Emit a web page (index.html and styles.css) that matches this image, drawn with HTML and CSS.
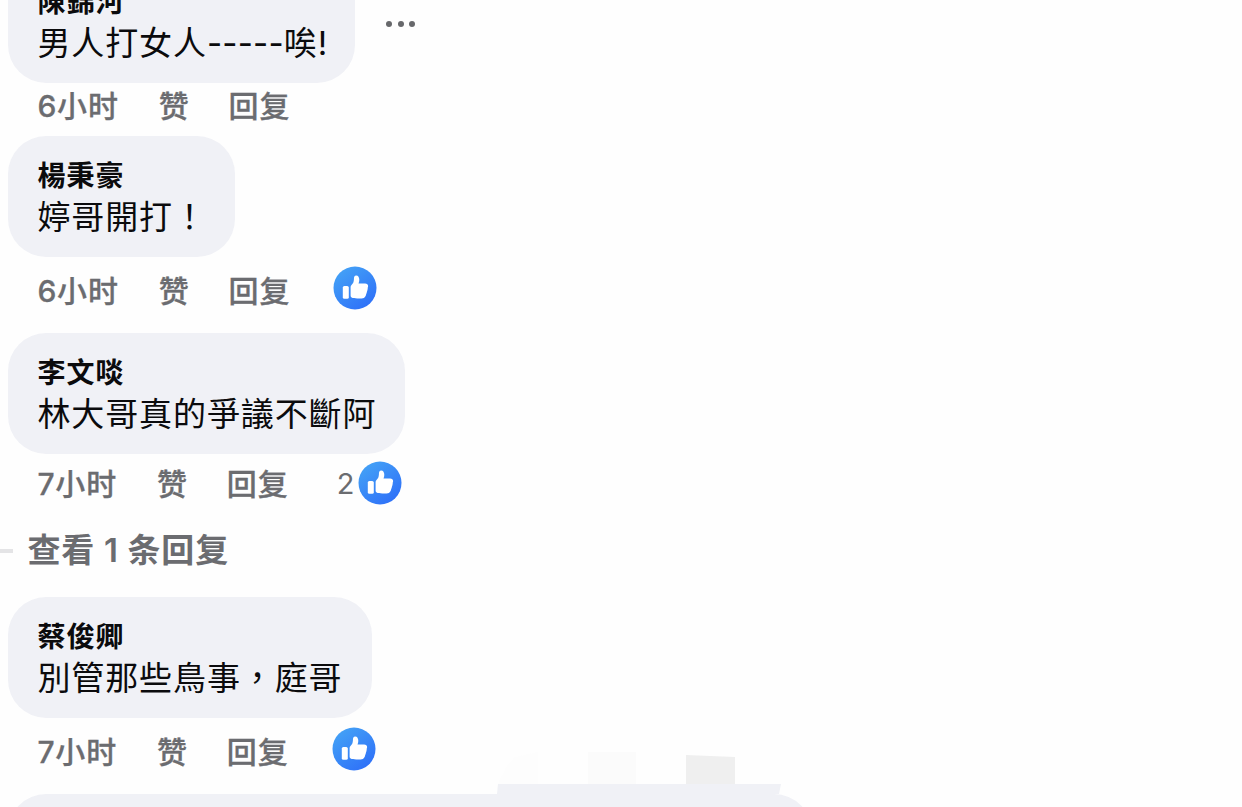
FILE: index.html
```
<!DOCTYPE html>
<html lang="zh-TW">
<head>
  <meta charset="UTF-8">
  <meta name="viewport" content="width=device-width, initial-scale=1">
  <title>留言</title>
  <link rel="stylesheet" href="styles.css">
</head>
<body>

  <!-- 共用圖示 -->
  <svg class="sprite" width="0" height="0">
    <defs>
      <linearGradient id="likeBlue" x1="0.15" y1="0.1" x2="0.75" y2="0.9">
        <stop offset="0" stop-color="#43a0f6"/>
        <stop offset="1" stop-color="#3074f8"/>
      </linearGradient>
      <symbol id="like" viewBox="0 0 44 44">
        <circle cx="22" cy="22" r="21.5" fill="url(#likeBlue)"/>
        <rect x="9.8" y="20" width="6" height="12.8" rx="1.6" fill="#fff"/>
        <path fill="#fff" d="M17.6 21.4c0-1.3.5-1.9 1.3-2.8 1.3-1.5 1.9-2.9 2-5.2 0-2.4.6-3.9 2.2-3.9 2.2 0 3.2 2 3.2 4.3 0 1.4-.3 2.4-.8 3.6h6.6c1.9 0 3 1.1 3 2.7 0 .7-.2 1.2-.4 1.7.1.7 0 1.3-.2 1.9-.1.8-.3 1.4-.6 2-.1 1.1-.3 1.7-.7 2.3-.1.8-.2 1.3-.6 1.9-.8 1.7-2.2 2.5-4 2.5h-4.3c-2.5 0-4.4-.3-5.7-.9-.7-.4-1-.9-1-1.7z"/>
      </symbol>
    </defs>
  </svg>

  <div class="comments">
    <div class="comment first">
      <div class="row">
        <div class="bubble">
          <div class="name">陳錦河</div>
          <div class="text">男人打女人<span class="dash">-----</span>唉!</div>
        </div>
        <div class="more"><i></i><i></i><i></i></div>
      </div>
      <div class="actions" lang="zh-CN">
        <span class="time">6小时</span><span>赞</span><span>回复</span>
      </div>
    </div>

    <div class="comment">
      <div class="bubble wide">
        <div class="name">楊秉豪</div>
        <div class="text">婷哥開打！</div>
      </div>
      <div class="actions" lang="zh-CN">
        <span class="time">6小时</span><span>赞</span><span>回复</span>
        <div class="likes"><svg><use href="#like"/></svg></div>
      </div>
    </div>

    <div class="comment has-replies">
      <div class="bubble">
        <div class="name">李文啖</div>
        <div class="text">林大哥真的爭議不斷阿</div>
      </div>
      <div class="actions" lang="zh-CN">
        <span class="time">7小时</span><span>赞</span><span>回复</span>
        <div class="likes"><b>2</b><svg><use href="#like"/></svg></div>
      </div>
      <div class="replies" lang="zh-CN">查看 1 条回复</div>
    </div>

    <div class="comment">
      <div class="bubble">
        <div class="name">蔡俊卿</div>
        <div class="text">別管那些鳥事，庭哥</div>
      </div>
      <div class="actions" lang="zh-CN">
        <span class="time">7小时</span><span>赞</span><span>回复</span>
        <div class="likes"><svg><use href="#like"/></svg></div>
      </div>
    </div>

    <div class="comment">
      <div class="bubble last">
        <!-- 馬賽克遮罩 -->
        <svg class="mosaic" width="284" height="43">
          <path fill="#fdfdfd" d="M1 33l8-17 9-10 23-5v32z"/>
          <path fill="#fbfbfb" d="M91 1h48v32H91z"/>
          <path fill="#fefefe" d="M139 1h49v32h-49z"/>
          <path fill="#efefef" d="M189 4l49 2v27h-49z"/>
          <path fill="#f0f1f6" d="M1 33h283l-2 10H0z"/>
        </svg>
      </div>
    </div>
  </div>

</body>
</html>
```

FILE: styles.css
```
* { margin: 0; padding: 0; box-sizing: border-box; }

body {
  height: 807px;
  overflow: hidden;
  background-color: #fefefe;
  color: #0b0b0d;
  font-family: Inter, "Noto Sans CJK TC", sans-serif;
}

.sprite {
  position: absolute;
}

.comments {
  height: 807px;
  padding-left: 8.4px;
  overflow: hidden;
}

.comment {
  display: flex;
  flex-direction: column;
  align-items: flex-start;
  height: 197px;
}

.comment.first {
  height: 174px;
  margin-top: -38px;
}

.comment.has-replies {
  height: 264px;
}

.row {
  display: flex;
}

.bubble {
  height: 121px;
  padding: 20px 29px 0;
  border-radius: 38px;
  background-color: #f0f1f6;
  white-space: nowrap;
}

.first .bubble {
  width: 347px;
}

.bubble.wide {
  width: 227px;
}

.name {
  font-size: 28px;
  font-weight: 600;
  line-height: 41px;
  letter-spacing: 1.1px;
}

.text {
  font-size: 33px;
  line-height: 41px;
  letter-spacing: 0.9px;
}

.dash {
  letter-spacing: 0.2px;
}

.more {
  display: flex;
  gap: 5.5px;
  margin: 59px 0 0 31px;
}

.more i {
  width: 6px;
  height: 6px;
  border-radius: 50%;
  background-color: #67686b;
}

.actions {
  display: flex;
  align-items: center;
  height: 64px;
  padding-left: 29px;
  color: #6b6c70;
  font-family: Inter, "Noto Sans CJK SC", sans-serif;
  font-size: 30px;
  font-weight: 500;
  letter-spacing: 0.9px;
  -webkit-text-stroke: 0.3px #6b6c70;
}

.actions span {
  margin-right: 39px;
}

.actions .time {
  margin-right: 40px;
  letter-spacing: 0.8px;
}

.first .actions {
  height: 42px;
}

.has-replies .actions {
  height: 55px;
}

.likes {
  display: flex;
  align-items: center;
  margin: -3px 0 0 4px;
}

.has-replies .likes {
  margin: 2px 0 0 9px;
}

.likes b {
  margin: 2px 4px 0 0;
  font-size: 29px;
  font-weight: 400;
  letter-spacing: 0;
  -webkit-text-stroke: 0;
}

.likes svg {
  width: 44px;
  height: 44px;
}

.replies {
  position: relative;
  padding-left: 19px;
  color: #6b6c70;
  font-family: Inter, "Noto Sans CJK SC", sans-serif;
  font-size: 33px;
  font-weight: 600;
  line-height: 83px;
  letter-spacing: 0.9px;
  word-spacing: -0.5px;
}

.replies::before {
  content: "";
  position: absolute;
  top: 40px;
  left: -9px;
  width: 14px;
  height: 4px;
  background-color: #e4e4e6;
}

.bubble.last {
  position: relative;
  width: 804px;
}

.mosaic {
  position: absolute;
  top: -43px;
  left: 489px;
}
```
